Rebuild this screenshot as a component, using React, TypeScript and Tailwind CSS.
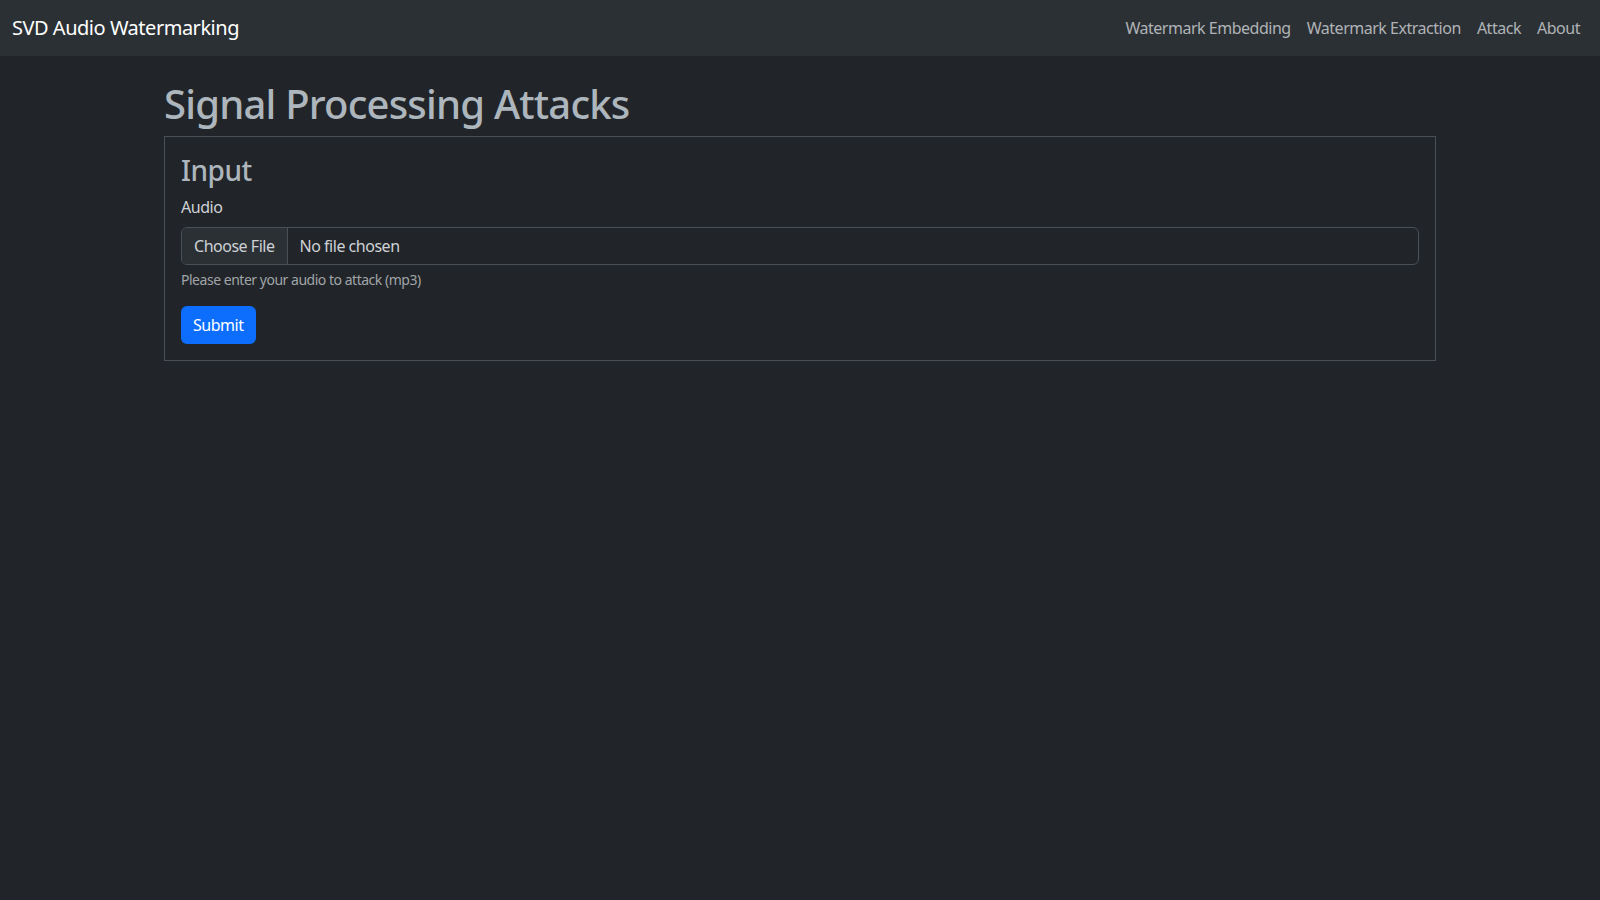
import React from "react"

const font = "font-['Segoe_UI','Noto_Sans','Liberation_Sans',sans-serif] tracking-[-0.03em]"

const links = ["Watermark Embedding", "Watermark Extraction", "Attack", "About"]

export default function App() {
  return (
    <div className={`min-h-screen bg-[#212529] text-[#dee2e6] ${font}`}>
      {/* Navbar */}
      <nav className="h-[56px] bg-[#2b3035] flex items-center justify-between px-3">
        <a href="#" className="text-white text-[20px] leading-[30px] py-[5px]">
          SVD Audio Watermarking
        </a>
        <div className="flex items-center">
          {links.map(l => (
            <a key={l} href="#" className="px-2 py-2 text-[16px] leading-6 text-[#b0b3b6] hover:text-white">
              {l}
            </a>
          ))}
        </div>
      </nav>

      {/* Content */}
      <main className="w-[1272px] mx-auto mt-6">
        <h1 className="text-[40px] leading-[48px] font-medium tracking-[-0.02em] text-[#adb5bd] mb-2">
          Signal Processing Attacks
        </h1>

        <div className="border border-[#495057] p-4">
          <h3 className="text-[28px] leading-[34px] font-medium text-[#adb5bd] mb-2">Input</h3>

          <label className="block text-[16px] leading-6 mb-2 text-[#ced2d6]">Audio</label>
          <div className="flex h-[38px] border border-[#495057] rounded-md overflow-hidden text-[16px] text-[#ced2d6]">
            <span className="flex items-center px-3 bg-[#2b3035] border-r border-[#495057]">
              Choose File
            </span>
            <span className="flex items-center px-3">No file chosen</span>
          </div>
          <p className="mt-1 text-[14px] leading-[21px] text-[#a0a4a8] mb-4">
            Please enter your audio to attack (mp3)
          </p>

          <button className="h-[38px] px-3 rounded-md bg-[#0d6efd] text-white text-[16px]">
            Submit
          </button>
        </div>
      </main>
    </div>
  )
}
